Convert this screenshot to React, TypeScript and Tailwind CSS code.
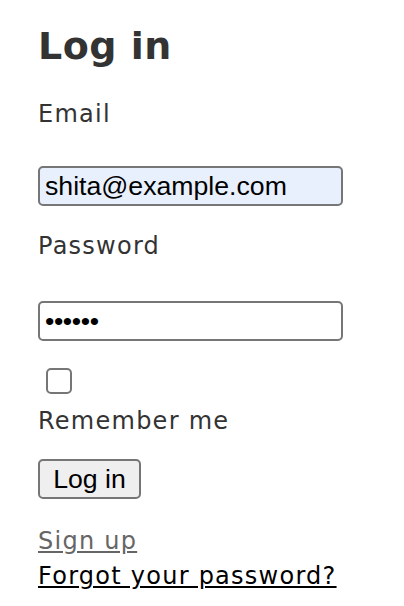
export default function App() {
  return (
    <div className="min-h-screen bg-white px-[38px] pt-[23px] font-['DejaVu_Sans',Verdana,sans-serif] text-[24px] leading-[36px] tracking-[1.25px] text-[#333]">
      <h1 className="text-[38px] font-bold leading-[46px] tracking-[0.5px] text-[#333]">Log in</h1>
      <form className="flex flex-col items-start" onSubmit={(e) => e.preventDefault()}>
        <label htmlFor="email" className="mt-[27px] block">
          Email
        </label>
        <input
          id="email"
          type="email"
          defaultValue="shita@example.com"
          className="mt-[34px] h-[40px] w-[305px] rounded-[5px] border-2 border-[#767676] bg-[#e8f0fe] px-[5px] font-['Liberation_Sans',Arial,sans-serif] text-[26.67px] tracking-normal text-black outline-none"
        />
        <label htmlFor="password" className="mt-[22px] block">
          Password
        </label>
        <input
          id="password"
          type="password"
          defaultValue="secret"
          className="mt-[37px] h-[40px] w-[305px] rounded-[5px] border-2 border-[#767676] bg-white px-[5px] font-['Liberation_Sans',Arial,sans-serif] text-[26.67px] tracking-[-0.4px] text-black outline-none"
        />
        <input
          type="checkbox"
          className="ml-[8px] mt-[27px] h-[26px] w-[26px] appearance-none rounded-[5px] border-2 border-[#767676] bg-white"
        />
        <label className="mt-[9px] block">Remember me</label>
        <button
          type="submit"
          className="mt-[20px] h-[40px] w-[103px] rounded-[5px] border-2 border-[#767676] bg-[#efefef] font-['Liberation_Sans',Arial,sans-serif] text-[26.67px] leading-none tracking-normal text-black"
        >
          Log in
        </button>
        <a href="#" className="mt-[24px] text-[#666] underline">
          Sign up
        </a>
        <a href="#" className="-mt-[1px] text-black underline">
          Forgot your password?
        </a>
      </form>
    </div>
  );
}
